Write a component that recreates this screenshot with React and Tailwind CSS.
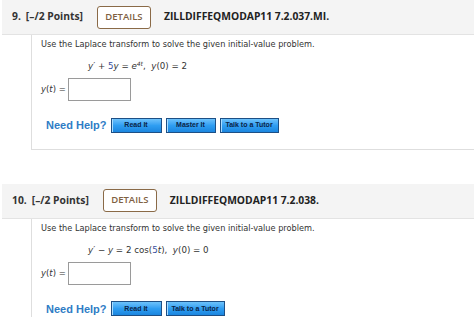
import React from "react";

const open = { fontFamily: '"Open Sans", "DejaVu Sans", sans-serif' };
const verdana = { fontFamily: '"DejaVu Sans", Verdana, sans-serif' };
const arial = { fontFamily: '"Liberation Sans", Arial, sans-serif' };

function HelpButton({ children, width }) {
  return (
    <div
      className={`h-[15px] ${width} flex items-center justify-center border border-[#1d4f85] bg-gradient-to-b from-[#6cc2fb] via-[#2f9ef2] to-[#1b86df] text-[7px] font-bold text-[#0b2447] shadow-[inset_1px_0_0_#a9dcff]`}
      style={arial}
    >
      {children}
    </div>
  );
}

function Question({ num, title, equation, buttons, last }) {
  return (
    <div>
      {/* Header */}
      <div className="ml-[2px] h-[35px] bg-[#f4f4f4] border-b border-[#e3e3e3] flex items-center pl-[10px] text-[#333]" style={open}>
        <span className="text-[10.3px] font-bold">{num}</span>
        <span className="text-[10.3px] font-bold ml-[5px]">[–/2 Points]</span>
        <div className="ml-[14px] w-[54px] h-[23px] border border-[#8a6a47] rounded-[3px] flex items-center justify-center text-[9.5px] font-semibold text-[#7f6143] bg-white">
          DETAILS
        </div>
        <span className="ml-[13px] text-[10.3px] font-bold text-[#222]">{title}</span>
      </div>

      {/* Body */}
      <div className={`ml-[31px] border-l border-[#dedede] pl-[9px] ${last ? "" : "border-b pb-[15px]"}`}>
        <div className="pt-[4px] text-[8.2px] leading-[10px] text-[#333]" style={verdana}>
          Use the Laplace transform to solve the given initial-value problem.
        </div>
        <div className="mt-[12px] pl-[47px] text-[8.7px] leading-[10px] text-[#333]" style={verdana}>
          {equation}
        </div>
        <div className="mt-[7px] flex items-center h-[23px]">
          <span className="text-[8.5px] text-[#333] w-[27px]" style={verdana}>
            <i>y</i>(<i>t</i>) =
          </span>
          <div className="w-[63px] h-[23px] border border-[#9a9a9a] bg-white" />
        </div>
        <div className="mt-[16px] flex items-center pl-[5px] gap-[4px]">
          <span className="text-[11px] font-bold text-[#2f7cc5]" style={arial}>Need Help?</span>
          {buttons.map((b) => (
            <HelpButton key={b.label} width={b.w}>{b.label}</HelpButton>
          ))}
        </div>
      </div>
    </div>
  );
}

export default function App() {
  return (
    <div className="w-[474px] h-[328px] bg-white overflow-hidden">
      <Question
        num="9."
        title="ZILLDIFFEQMODAP11 7.2.037.MI."
        equation={
          <>
            <i>y</i>′ + <span className="text-[#3a4fa0]">5</span><i>y</i> = <i>e</i>
            <sup className="text-[6px]"><i>4t</i></sup>,&nbsp; <i>y</i>(0) = 2
          </>
        }
        buttons={[
          { label: "Read It", w: "w-[51px]" },
          { label: "Master It", w: "w-[50px]" },
          { label: "Talk to a Tutor", w: "w-[59px]" },
        ]}
      />
      <div className="h-[34px]" />
      <Question
        num="10."
        title="ZILLDIFFEQMODAP11 7.2.038."
        equation={
          <>
            <i>y</i>′ − <i>y</i> = 2 cos(<span className="text-[#3a4fa0]">5</span><i>t</i>),&nbsp; <i>y</i>(0) = 0
          </>
        }
        buttons={[
          { label: "Read It", w: "w-[51px]" },
          { label: "Talk to a Tutor", w: "w-[59px]" },
        ]}
        last
      />
    </div>
  );
}
